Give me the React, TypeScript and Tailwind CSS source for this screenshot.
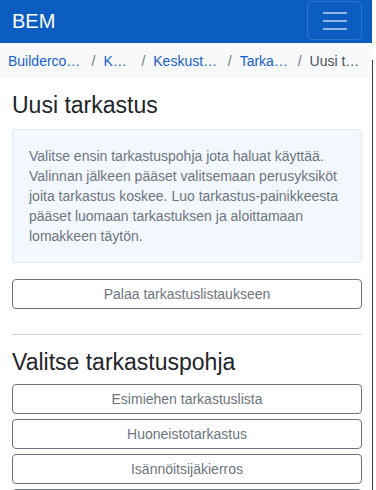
import React from 'react';

const crumbs = [
  { label: 'Builderco…', w: 'w-[75.5px]' },
  { label: 'K…', w: 'w-[30px]' },
  { label: 'Keskust…', w: 'w-[66.5px]' },
  { label: 'Tarka…', w: 'w-[50px]' },
];

const templates = ['Esimiehen tarkastuslista', 'Huoneistotarkastus', 'Isännöitsijäkierros'];

function OutlineButton({ children }: { children?: React.ReactNode }) {
  return (
    <button className="flex h-[30px] w-full items-center justify-center rounded-[4px] border border-[#6c757d] bg-white text-[14px] leading-[20px] text-[#6c757d]">
      {children}
    </button>
  );
}

export default function App() {
  return (
    <div
      className="flex min-h-[490px] w-[376px] bg-white text-[#212529]"
      style={{ fontFamily: '"Liberation Sans", Arial, sans-serif' }}
    >
      <div className="w-[372px] shrink-0">
        {/* Navbar */}
        <nav className="flex h-[43px] items-start justify-between bg-[#0b5dc1] pl-3 pr-[10px]">
          <span className="mt-[9px] text-[20px] leading-[24px] text-white">BEM</span>
          <button className="mt-px flex h-[39px] w-[55px] flex-col items-center justify-center gap-[6px] rounded-[5px] border border-white/15">
            <span className="block h-[2px] w-6 bg-white/55" />
            <span className="block h-[2px] w-6 bg-white/55" />
            <span className="block h-[2px] w-6 bg-white/55" />
          </button>
        </nav>

        {/* Breadcrumb */}
        <div className="flex h-[35px] items-center bg-[#f8f9fa] pl-2 text-[14px] leading-[20px]">
          {crumbs.map((c) => (
            <React.Fragment key={c.label}>
              <span className={`${c.w} shrink-0 whitespace-nowrap text-[#1a5fcf]`}>{c.label}</span>
              <span className="shrink-0 px-2 text-[#6c757d]">/</span>
            </React.Fragment>
          ))}
          <span className="whitespace-nowrap text-[#4a4f55]">Uusi t…</span>
        </div>

        <main className="pl-3 pr-[10px]">
          <h3 className="mt-[14px] mb-[9.5px] text-[23px] font-normal leading-[1.2]">Uusi tarkastus</h3>

          <div className="rounded-[4px] border border-[#e3edf9] bg-[#f3f8ff] p-4 text-[14px] leading-[20px] text-[#6c757d]">
            Valitse ensin tarkastuspohja jota haluat käyttää. Valinnan jälkeen pääset valitsemaan
            perusyksiköt joita tarkastus koskee. Luo tarkastus-painikkeesta pääset luomaan
            tarkastuksen ja aloittamaan lomakkeen täytön.
          </div>

          <div className="mt-4">
            <OutlineButton>Palaa tarkastuslistaukseen</OutlineButton>
          </div>

          <hr className="mt-[25px] border-t border-[#cfd2d5]" />

          <h3 className="mt-[14px] mb-[7.5px] text-[23px] font-normal leading-[1.2]">
            Valitse tarkastuspohja
          </h3>

          {/* Template list, last one runs past the fold */}
          <div className="flex flex-col gap-[5px]">
            {templates.map((t) => (
              <OutlineButton key={t}>{t}</OutlineButton>
            ))}
            <OutlineButton />
          </div>
        </main>
      </div>
      <div className="mt-[60px] w-px shrink-0 bg-[#3b3b3b]" />
    </div>
  );
}
